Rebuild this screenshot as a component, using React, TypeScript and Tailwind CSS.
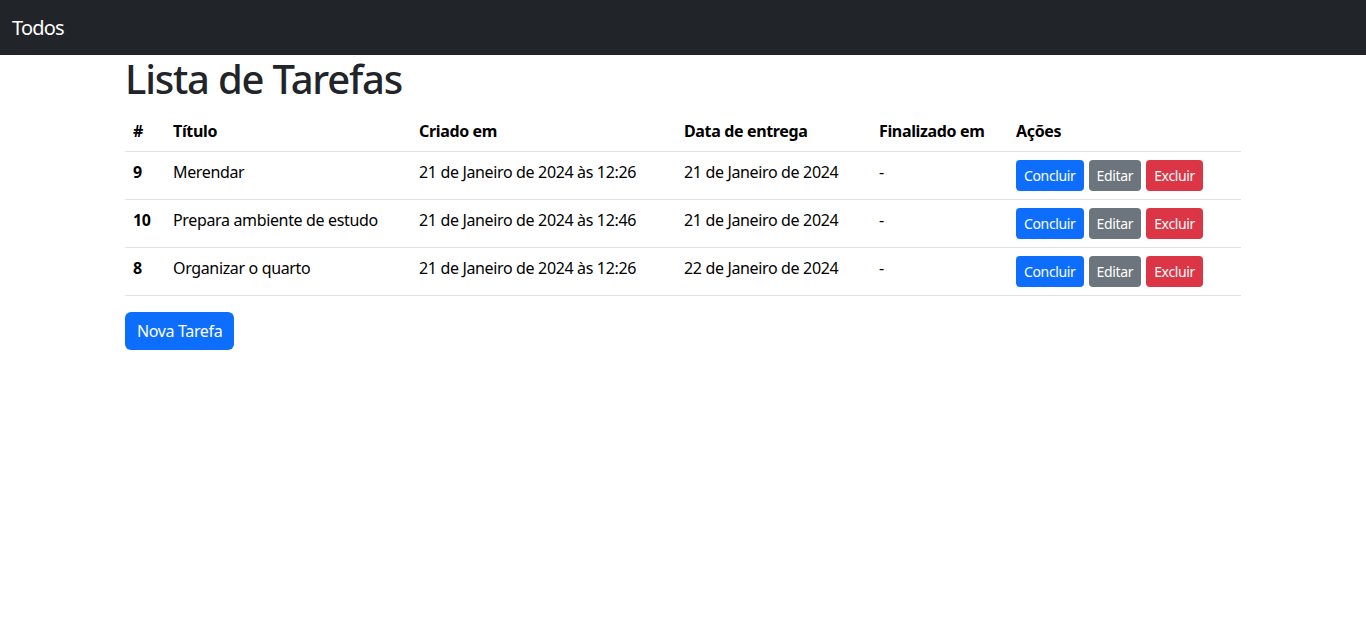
const tarefas = [
  { id: 9, titulo: "Merendar", criado: "21 de Janeiro de 2024 às 12:26", entrega: "21 de Janeiro de 2024", finalizado: "-" },
  { id: 10, titulo: "Prepara ambiente de estudo", criado: "21 de Janeiro de 2024 às 12:46", entrega: "21 de Janeiro de 2024", finalizado: "-" },
  { id: 8, titulo: "Organizar o quarto", criado: "21 de Janeiro de 2024 às 12:26", entrega: "22 de Janeiro de 2024", finalizado: "-" },
];

const App = () => {
  return (
    <div className="min-h-screen bg-white text-[#212529] font-['Noto_Sans',sans-serif] tracking-[-0.35px]">
      {/* Navbar */}
      <nav className="h-[55px] bg-[#212529] flex items-center px-3">
        <span className="text-white text-xl tracking-[-0.8px]">Todos</span>
      </nav>

      {/* Main container */}
      <main className="w-[1140px] mx-auto px-3">
        <h1 className="text-[40px] leading-[48px] font-medium tracking-[-1.2px] mb-2">Lista de Tarefas</h1>

        <table className="w-full table-fixed border-collapse text-black mb-4">
          <thead>
            <tr className="border-b border-[#dee2e6] text-left">
              <th className="w-[40px] p-2 font-bold">#</th>
              <th className="w-[246px] p-2 font-bold">Título</th>
              <th className="w-[265px] p-2 font-bold">Criado em</th>
              <th className="w-[195px] p-2 font-bold">Data de entrega</th>
              <th className="w-[137px] p-2 font-bold">Finalizado em</th>
              <th className="p-2 font-bold">Ações</th>
            </tr>
          </thead>
          <tbody>
            {tarefas.map((t) => (
              <tr key={t.id} className="border-b border-[#dee2e6] align-top">
                <td className="p-2 font-bold leading-6">{t.id}</td>
                <td className="p-2 leading-6">{t.titulo}</td>
                <td className="p-2 leading-6">{t.criado}</td>
                <td className="p-2 leading-6">{t.entrega}</td>
                <td className="p-2 leading-6">{t.finalizado}</td>
                <td className="p-2">
                  <div className="flex gap-[5px]">
                    <button className="h-[31px] px-2 rounded text-sm text-white bg-[#0d6efd]">Concluir</button>
                    <button className="h-[31px] px-2 rounded text-sm text-white bg-[#6c757d]">Editar</button>
                    <button className="h-[31px] px-2 rounded text-sm text-white bg-[#dc3545]">Excluir</button>
                  </div>
                </td>
              </tr>
            ))}
          </tbody>
        </table>

        <button className="h-[38px] px-3 rounded-md text-white bg-[#0d6efd]">Nova Tarefa</button>
      </main>
    </div>
  );
};

export default App;
